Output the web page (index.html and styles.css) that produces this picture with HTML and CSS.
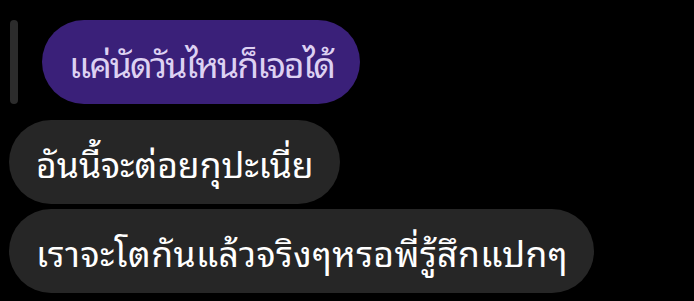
FILE: index.html
```html
<!DOCTYPE html>
<html lang="th">
<head>
  <meta charset="UTF-8" />
  <meta name="viewport" content="width=device-width, initial-scale=1.0" />
  <title>Chat</title>
  <link rel="stylesheet" href="styles.css">
</head>
<body>
  <div class="chat">
    <div class="reply">
      <div class="reply-bar"></div>
      <div class="bubble purple">แค่นัดวันไหนก็เจอได้</div>
    </div>
    <div class="bubble gray">อันนี้จะต่อยกุปะเนี่ย</div>
    <div class="bubble gray wide">เราจะโตกันแล้วจริงๆหรอพี่รู้สึกแปกๆ</div>
  </div>
</body>
</html>
```

FILE: styles.css
```css
body {
  margin: 0;
  background: #000;
  font-family: 'Noto Sans Thai Looped', 'Loma', sans-serif;
}
.chat {
  padding: 20px 9px 0;
  display: flex;
  flex-direction: column;
  align-items: flex-start;
  gap: 5px;
}
.reply {
  display: flex;
  align-items: stretch;
  gap: 24px;
  margin-bottom: 11px;
}
.reply-bar {
  width: 8px;
  margin-left: 1px;
  background: #2c2c2c;
  border-radius: 4px;
}
.bubble {
  height: 84px;
  box-sizing: border-box;
  padding: 0 26px 0 27px;
  border-radius: 42px;
  display: flex;
  align-items: center;
  font-size: 35.5px;
  white-space: nowrap;
}
.purple {
  background: #3a2079;
  color: #ddd1f2;
  letter-spacing: -1.9px;
}
.gray {
  background: #262626;
  color: #fff;
}
.wide {
  letter-spacing: 0.45px;
}
```
